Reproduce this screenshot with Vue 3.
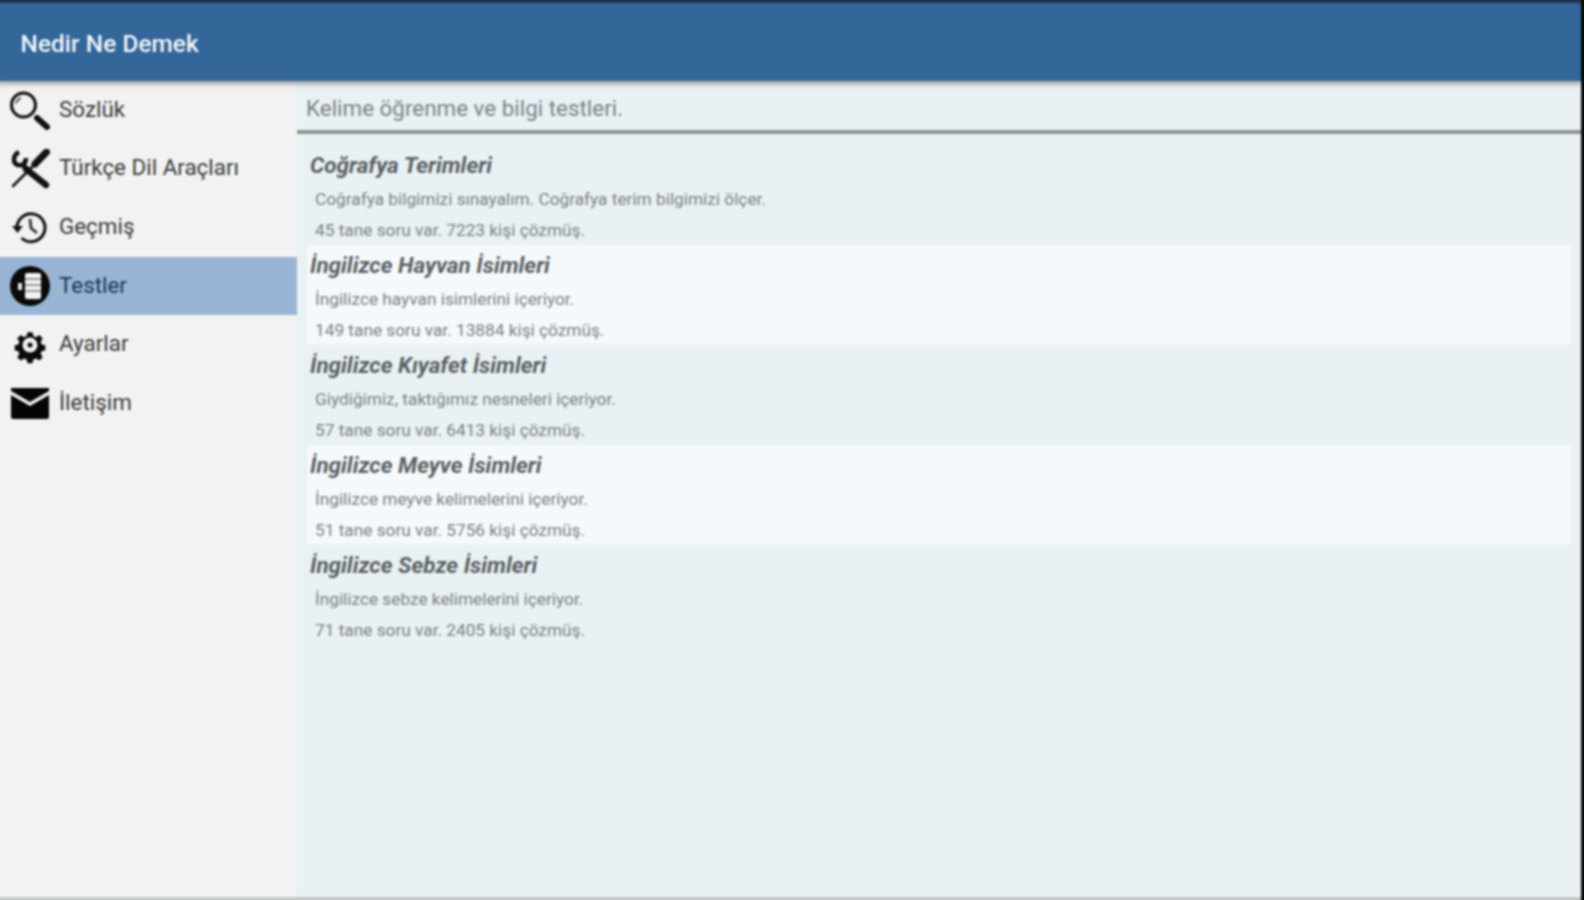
<script setup>
const menu = [
  { key: 'search', label: 'Sözlük' },
  { key: 'tools', label: 'Türkçe Dil Araçları' },
  { key: 'history', label: 'Geçmiş' },
  { key: 'tests', label: 'Testler', active: true },
  { key: 'gear', label: 'Ayarlar' },
  { key: 'mail', label: 'İletişim' },
]
const tests = [
  { t: 'Coğrafya Terimleri', d: 'Coğrafya bilgimizi sınayalım. Coğrafya terim bilgimizi ölçer.', s: '45 tane soru var. 7223 kişi çözmüş.' },
  { t: 'İngilizce Hayvan İsimleri', d: 'İngilizce hayvan isimlerini içeriyor.', s: '149 tane soru var. 13884 kişi çözmüş.' },
  { t: 'İngilizce Kıyafet İsimleri', d: 'Giydiğimiz, taktığımız nesneleri içeriyor.', s: '57 tane soru var. 6413 kişi çözmüş.' },
  { t: 'İngilizce Meyve İsimleri', d: 'İngilizce meyve kelimelerini içeriyor.', s: '51 tane soru var. 5756 kişi çözmüş.' },
  { t: 'İngilizce Sebze İsimleri', d: 'İngilizce sebze kelimelerini içeriyor.', s: '71 tane soru var. 2405 kişi çözmüş.' },
]
</script>

<template>
  <div class="app">
    <div class="screen">
      <header class="bar"><span class="brand">Nedir Ne Demek</span></header>
      <div class="body">
        <nav class="side">
          <div v-for="m in menu" :key="m.key" class="item" :class="{ active: m.active }">
            <span class="ico">
              <svg v-if="m.key === 'search'" viewBox="0 0 40 40" width="40" height="40">
                <circle cx="13.500" cy="15" r="12" fill="none" stroke="#111" stroke-width="3" />
                <path d="M6 13.500a8 8 0 0 1 5-5.500" fill="none" stroke="#333" stroke-width="1.500" />
                <path d="M27 28l10 9" stroke="#111" stroke-width="6" stroke-linecap="round" />
              </svg>
              <svg v-else-if="m.key === 'tools'" viewBox="0 0 40 40" width="40" height="40">
                <path d="M36.500 3L25 15" stroke="#111" stroke-width="7" stroke-linecap="round" />
                <path d="M25 15L3 37" stroke="#111" stroke-width="2.500" stroke-linecap="round" />
                <path d="M16 20l20 16" stroke="#111" stroke-width="6.500" stroke-linecap="round" />
                <path d="M9 3C3 6 2 14 8 16c5 1 8-2 8-7" fill="none" stroke="#111" stroke-width="4.500" />
                <path d="M12 15l6 6" stroke="#111" stroke-width="5" />
              </svg>
              <svg v-else-if="m.key === 'history'" viewBox="0 0 40 40" width="40" height="40">
                <path d="M7 21a14 14 0 1 1 4.500 10" fill="none" stroke="#111" stroke-width="3" />
                <path d="M2 19h11l-5.500 7z" fill="#111" />
                <path d="M20 12l1 9 6 5" fill="none" stroke="#333" stroke-width="2.800" />
              </svg>
              <svg v-else-if="m.key === 'tests'" viewBox="0 0 40 40" width="40" height="40">
                <circle cx="20" cy="20" r="20" fill="#0a0a0a" />
                <rect x="15" y="7" width="16" height="26" rx="2" fill="#f4f4f4" />
                <path d="M15 13h16M15 19h16M15 25h16" stroke="#777" stroke-width="1.300" />
                <rect x="8" y="17" width="4" height="7" fill="#e8e8e8" />
              </svg>
              <svg v-else-if="m.key === 'gear'" viewBox="0 0 40 40" width="40" height="40">
                <path d="M17 5h6l1 4.500 3 1.300 4-2.500 4 4-2.500 4 1.300 3 4.200 1v6l-4.200 1-1.300 3 2.500 4-4 4-4-2.500-3 1.300-1 4.400h-6l-1-4.400-3-1.300-4 2.500-4-4 2.500-4-1.300-3-4.200-1v-6l4.200-1 1.300-3-2.500-4 4-4 4 2.500 3-1.300z" fill="#0a0a0a" transform="translate(3 3) scale(.85)" />
                <circle cx="20" cy="20" r="7.500" fill="#f2f2f2" />
                <circle cx="20" cy="20" r="2.500" fill="#0a0a0a" />
              </svg>
              <svg v-else viewBox="0 0 40 34" width="40" height="34">
                <path d="M1 2h38v3L20 16 1 5z" fill="#050505" />
                <path d="M1 9l19 11 19-11v22c0 1-1 2-2 2H3c-1 0-2-1-2-2z" fill="#050505" />
              </svg>
            </span>
            <span class="label">{{ m.label }}</span>
          </div>
        </nav>
        <main class="main">
          <div class="intro">Kelime öğrenme ve bilgi testleri.</div>
          <ul class="list">
            <li v-for="(x, i) in tests" :key="x.t" class="row" :class="{ alt: i % 2 === 1 }">
              <h3>{{ x.t }}</h3>
              <p>{{ x.d }}</p>
              <p class="stat">{{ x.s }}</p>
            </li>
          </ul>
        </main>
      </div>
    </div>
  </div>
</template>

<style>
html, body { margin: 0; background: #0a0a0a; overflow: hidden; }
</style>

<style scoped>
.app {
  width: 1584px;
  height: 900px;
  box-sizing: border-box;
  padding-right: 3px;
  background: #0a0a0a;
  font-family: Roboto, "Liberation Sans", sans-serif;
  overflow: hidden;
}
/* The screen overshoots the window by 3px on three sides so the blur has no edge to fade on. */
.screen {
  height: 906px;
  margin: -3px 0 0 -3px;
  display: flex;
  flex-direction: column;
  background: #e9f1f4;
  filter: blur(0.8px);
}
.bar {
  flex: none;
  height: 84px;
  box-sizing: border-box;
  border-top: 6px solid #1f3350;
  background: #336699;
  display: flex;
  align-items: center;
  padding: 3px 0 0 23.500px;
  position: relative;
  z-index: 1;
  box-shadow: 0 3px 5px rgba(0, 0, 0, .35);
}
.brand { color: #f4f8fb; font-size: 24.500px; font-weight: 500; }
.body { flex: 1; display: flex; min-height: 0; border-bottom: 6px solid #c4c9c9; }
.side { width: 300px; flex: none; background: #f2f2f2; }
.item { height: 58.600px; display: flex; align-items: center; gap: 9px; padding-left: 13px; box-sizing: border-box; }
.item.active { background: #99b5d6; }
.ico { width: 40px; height: 40px; display: flex; align-items: center; justify-content: center; flex: none; }
.label { font-size: 22.400px; color: #3a3a3a; padding-bottom: 3px; }
.item.active .label { color: #1c3553; }
.main { flex: 1; min-width: 0; display: flex; flex-direction: column; }
.intro {
  height: 53px;
  box-sizing: border-box;
  padding: 14px 0 0 9px;
  font-size: 22.400px;
  color: #7b8286;
  border-bottom: 4px solid #8f9395;
}
.list { list-style: none; margin: 0; padding: 11px 10px 0 10px; }
.row { height: 99px; margin-bottom: 1px; padding-left: 3px; }
.row.alt { background: #f6f9fb; }
h3 { margin: 0; height: 39px; font-size: 22.500px; line-height: 40px; font-style: italic; font-weight: 700; color: #5a6063; }
p { margin: 0 0 0 5px; font-size: 17.250px; line-height: 30px; color: #7b8184; }
.stat { margin-top: 1px; }
</style>
